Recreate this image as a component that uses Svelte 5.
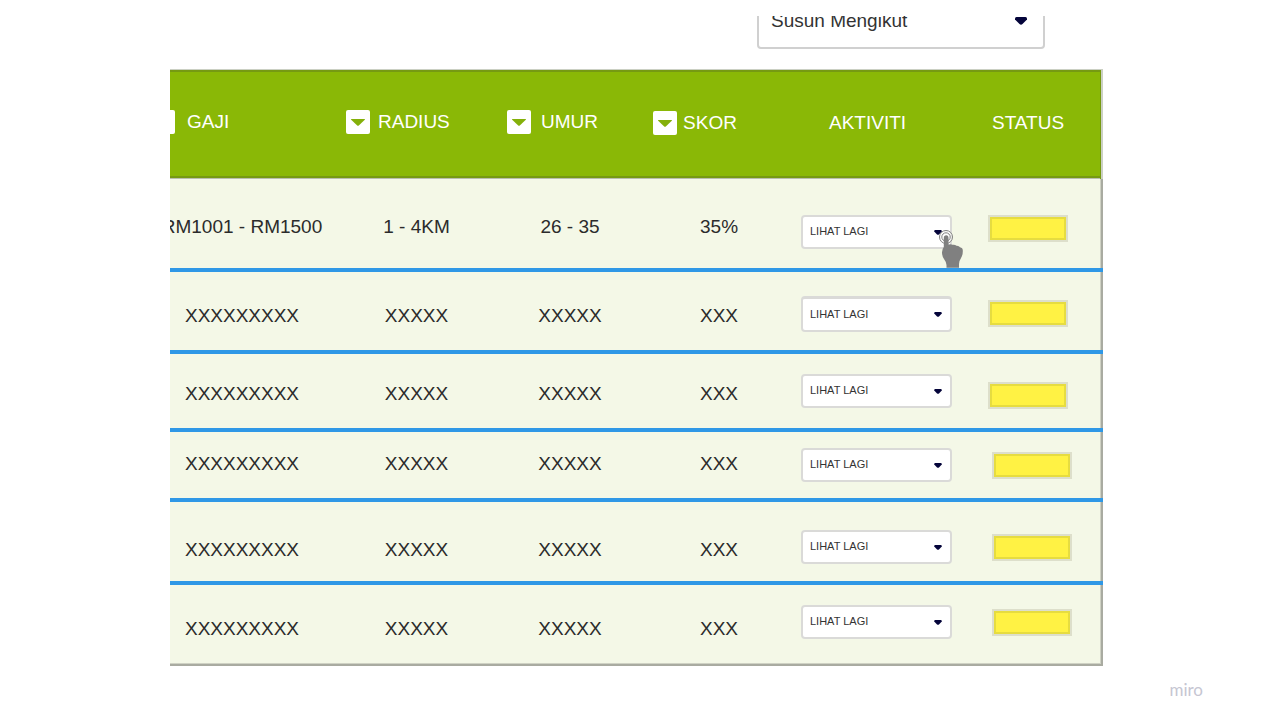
<script>
  const columns = [
    { key: 'gaji', label: 'GAJI', sortable: true },
    { key: 'radius', label: 'RADIUS', sortable: true },
    { key: 'umur', label: 'UMUR', sortable: true },
    { key: 'skor', label: 'SKOR', sortable: true },
    { key: 'aktiviti', label: 'AKTIVITI', sortable: false },
    { key: 'status', label: 'STATUS', sortable: false }
  ];

  const masked = ['XXXXXXXXX', 'XXXXX', 'XXXXX', 'XXX'];

  // text, action and status are the space above each kind of cell content
  const rows = [
    { values: ['RM1001 - RM1500', '1 - 4KM', '26 - 35', '35%'], height: 93, text: 36, action: 36, status: 36, pointer: true },
    { values: masked, height: 82, text: 32, action: 24, status: 28, thick: true },
    { values: masked, height: 78, text: 28, action: 20, status: 28 },
    { values: masked, height: 70, text: 20, action: 16, status: 20, shifted: true },
    { values: masked, height: 83, text: 36, action: 28, status: 32, shifted: true },
    { values: masked, height: 81, text: 32, action: 20, status: 24, shifted: true }
  ];
</script>

<main class="page">
  <div class="toolbar">
    <div class="picker sort">
      <select aria-label="Susun Mengikut">
        <option>Susun Mengikut</option>
      </select>
      <svg class="caret" viewBox="0 0 12 8" aria-hidden="true">
        <path d="M1.500 0h9q1.500 0 1.500 1.500v1L7.500 7Q6 8.500 4.500 7L0 2.500v-1q0-1.500 1.500-1.500z" />
      </svg>
    </div>
  </div>

  <div class="sheet">
    <table>
      <colgroup>
        {#each columns as column}
          <col class={column.key} />
        {/each}
      </colgroup>
      <thead>
        <tr>
          {#each columns as column}
            <th scope="col" class={column.key}>
              {#if column.sortable}
                <button type="button" class="sorter">
                  <svg class="toggle" viewBox="0 0 24 24" aria-hidden="true">
                    <rect width="24" height="24" rx="2" fill="#fff" />
                    <path d="M5.500 9h13q1 0 .3.800l-6 5.700q-.8.700-1.600 0l-6-5.700Q4.500 9 5.500 9z" fill="#84b00a" />
                  </svg>
                  <span>{column.label}</span>
                </button>
              {:else}
                {column.label}
              {/if}
            </th>
          {/each}
        </tr>
      </thead>
      <tbody>
        {#each rows as row, i}
          <tr style:height="{row.height}px">
            {#each row.values as value, c}
              <td class={columns[c].key} style:padding-top="{row.text}px">
                <div class="value">{value}</div>
              </td>
            {/each}
            <td class="aktiviti" style:padding-top="{row.action}px">
              <div class="picker action" class:thick={row.thick}>
                <select aria-label="Aktiviti baris {i + 1}">
                  <option>LIHAT LAGI</option>
                </select>
                <svg class="caret" viewBox="0 0 12 8" aria-hidden="true">
                  <path d="M1.500 0h9q1.500 0 1.500 1.500v1L7.500 7Q6 8.500 4.500 7L0 2.500v-1q0-1.500 1.500-1.500z" />
                </svg>
                {#if row.pointer}
                  <svg class="pointer" viewBox="0 0 26 40" aria-hidden="true">
                    <circle cx="8" cy="8" r="6.500" fill="#fff" fill-opacity=".6" stroke="#808080" />
                    <circle cx="8" cy="8" r="4.200" fill="none" stroke="#808080" />
                    <path
                      d="M5.800 9Q5.800 6.200 8.200 6.200Q10.500 6.200 10.500 9V15.500Q13 14.800 14.500 15.800Q17 15.400 18.500 16.800Q21 16.600 22 18.300Q24.800 18.800 24.800 21.500Q25 26 22.800 29.500Q21 32 21 35V38.800H8.500V36Q8 32.500 6 30Q4.200 27.500 4 24Q3.800 20.500 5.800 18z"
                      fill="#808080"
                    />
                  </svg>
                {/if}
              </div>
            </td>
            <td class="status" class:shifted={row.shifted} style:padding-top="{row.status}px">
              <div class="badge"></div>
            </td>
          </tr>
        {/each}
      </tbody>
    </table>
  </div>

  <footer>miro</footer>
</main>

<style>
  :global(body) {
    margin: 0;
    background: #fff;
  }

  .page {
    padding: 16px 0 0 170px;
    font-family: 'Liberation Sans', Arial, sans-serif;
    font-size: 19px;
    line-height: 24px;
    color: #2b2b2b;
  }

  .toolbar {
    display: flex;
    justify-content: flex-end;
    align-items: flex-end;
    height: 33px;
    margin-right: 177px;
    padding-right: 58px;
    overflow: hidden;
  }

  .picker {
    display: grid;
    align-items: center;
  }

  .picker select,
  .caret {
    grid-area: 1 / 1;
  }

  select {
    appearance: none;
    box-sizing: border-box;
    width: 100%;
    margin: 0;
    border: 2px solid #d0d0d0;
    border-radius: 4px;
    background: #fff;
    color: #333;
    font-family: inherit;
  }

  .caret {
    justify-self: end;
    pointer-events: none;
    fill: #04043a;
  }

  .sort {
    flex: none;
    width: 288px;
  }

  .sort select {
    height: 56px;
    padding: 0 12px 2px;
    font-size: 19px;
  }

  .sort .caret {
    width: 12px;
    height: 8px;
    margin-right: 18px;
  }

  .sheet {
    margin: 20px 177px 0 0;
    overflow: hidden;
  }

  table {
    width: 100%;
    table-layout: fixed;
    border-collapse: separate;
    border-spacing: 0;
  }

  col.gaji { width: 17.15%; }
  col.radius { width: 17.26%; }
  col.umur { width: 15.65%; }
  col.skor { width: 15.86%; }
  col.aktiviti { width: 20.04%; }
  col.status { width: 14.04%; }

  th {
    height: 110px;
    box-sizing: border-box;
    padding: 0 0 2px 16px;
    background: #8ab806;
    box-shadow:
      inset 0 1px #cbd0c3,
      inset 0 3px #769a12,
      inset 0 -1px #b9bfae,
      inset 0 -3px #769a12;
    color: #fff;
    font-weight: 400;
    text-align: left;
    white-space: nowrap;
  }

  th.gaji {
    padding: 0 0 5px;
  }

  th.radius,
  th.umur {
    padding-bottom: 5px;
  }

  th.aktiviti {
    padding-left: 44px;
  }

  th.status {
    padding-left: 20px;
    box-shadow:
      inset -2px 1px #cbd0c3,
      inset -3px 3px #769a12,
      inset 0 -1px #b9bfae,
      inset 0 -3px #769a12;
  }

  .sorter {
    display: flex;
    align-items: center;
    gap: 8px;
    padding: 0;
    border: 0;
    background: none;
    color: inherit;
    font: inherit;
  }

  .gaji .sorter {
    gap: 12px;
    margin-left: -19px;
  }

  .umur .sorter {
    gap: 10px;
  }

  .skor .sorter {
    gap: 6px;
  }

  .toggle {
    width: 24px;
    height: 24px;
    flex: none;
  }

  td {
    box-sizing: border-box;
    padding: 0;
    border-bottom: 4px solid #2f98e6;
    background: #f4f8e7;
    vertical-align: top;
    white-space: nowrap;
  }

  /* Flex centring lets a wide value spill evenly past both sides of its cell. */
  .value {
    display: flex;
    justify-content: center;
  }

  td.gaji {
    padding-right: 16px;
  }

  td.radius,
  td.umur {
    padding-left: 12px;
  }

  td.skor {
    padding-left: 16px;
  }

  td.aktiviti,
  td.status {
    padding-left: 16px;
  }

  td.status.shifted {
    padding-left: 20px;
  }

  td.status {
    box-shadow: inset -2px 0 #a9aba1, inset -3px 0 #cfd2c4;
  }

  tbody tr:last-child td {
    border-bottom: 0;
    box-shadow: inset 0 -2px #a9aba1, inset 0 -3px #cfd2c4;
  }

  tbody tr:last-child td.status {
    box-shadow: inset -2px -2px #a9aba1, inset -3px -3px #cfd2c4;
  }

  .action {
    position: relative;
    width: 151px;
  }

  .action select {
    height: 34px;
    padding: 0 7px 2px;
    border-color: #dadad8;
    font-size: 11px;
  }

  .action.thick select {
    height: 36px;
    border-top-width: 3px;
  }

  .action .caret {
    width: 8px;
    height: 5px;
    margin-right: 10px;
  }

  .pointer {
    position: absolute;
    left: 137px;
    top: 14px;
    width: 26px;
    height: 40px;
    pointer-events: none;
  }

  .badge {
    box-sizing: border-box;
    width: 80px;
    height: 27px;
    border: 2px solid #dddfcb;
    background: #fff244;
    box-shadow: inset 0 0 0 2px #e6dc40;
  }

  footer {
    padding: 12px 77px 0 0;
    color: #c6c6d2;
    font-family: Lato, sans-serif;
    font-size: 17px;
    text-align: right;
  }
</style>
